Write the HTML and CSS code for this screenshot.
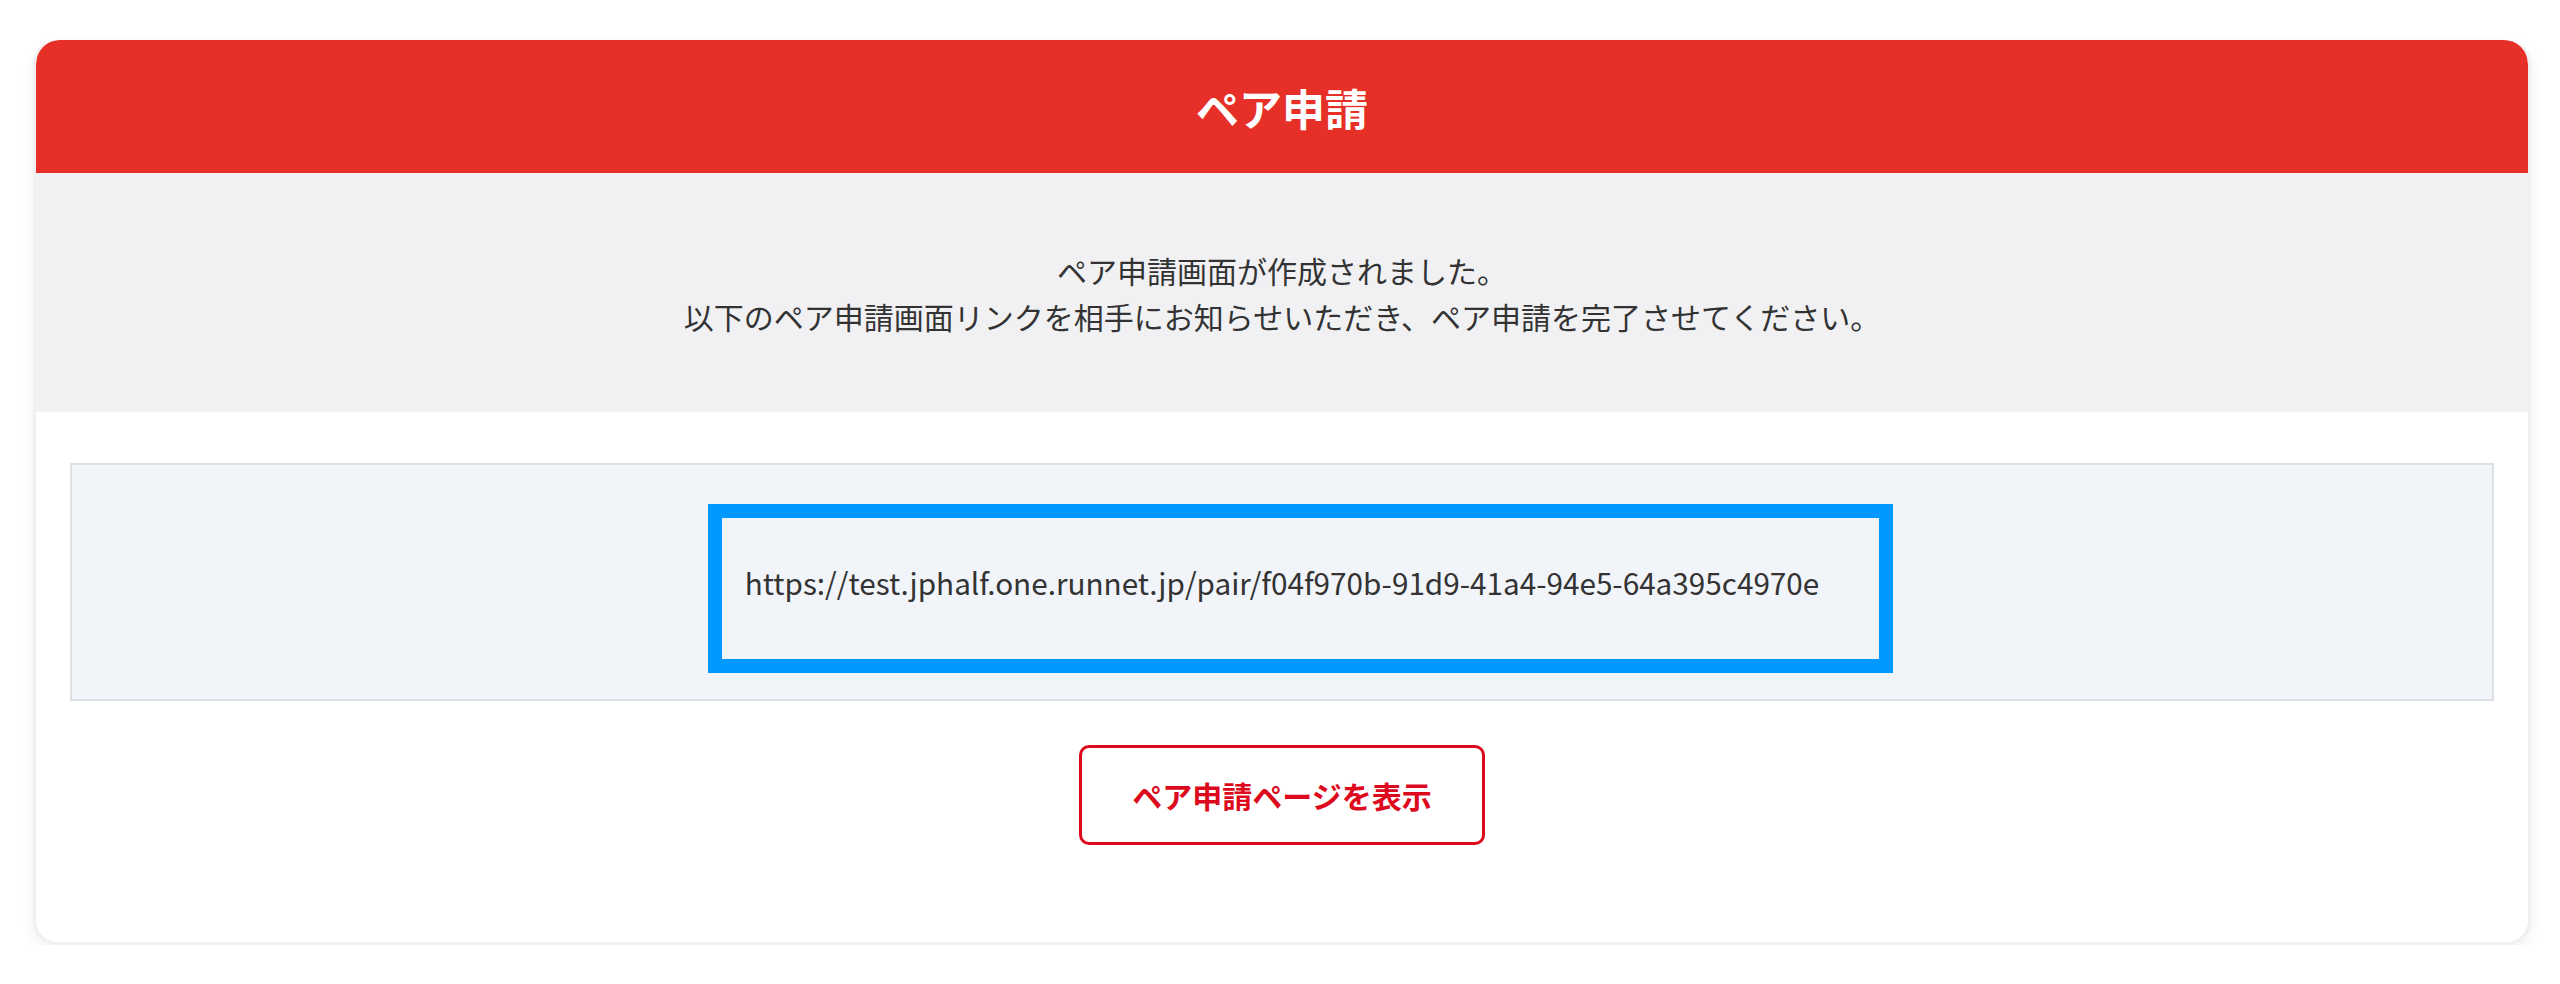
FILE: index.html
```html
<!DOCTYPE html>
<html lang="ja">
  <head>
    <meta charset="UTF-8" />
    <meta name="viewport" content="width=device-width, initial-scale=1.0" />
    <title>ペア申請</title>
    <link rel="stylesheet" href="styles.css">
  </head>
  <body>
    <section class="card">
      <h1 class="card-title">ペア申請</h1>
      <div class="intro">
        <p>ペア申請画面が作成されました。</p>
        <p>以下のペア申請画面リンクを相手にお知らせいただき、ペア申請を完了させてください。</p>
      </div>
      <div class="card-body">
        <div class="link-box">
          <span class="link-url">https://test.jphalf.one.runnet.jp/pair/f04f970b-91d9-41a4-94e5-64a395c4970e</span>
          <div class="link-mark"></div>
        </div>
        <button type="button" class="btn-outline">ペア申請ページを表示</button>
      </div>
    </section>
  </body>
</html>
```

FILE: styles.css
```css
/*********** Base ***********/
* {
  box-sizing: border-box;
}

body {
  margin: 0;
  background: #fff;
  color: #333;
  font-family: "Noto Sans CJK JP", "Noto Sans", sans-serif;
}

p {
  margin: 0;
}

/*********** Card ***********/
.card {
  margin: 40px 29px 0 33px;
  border: 3px solid #f0f0f2;
  border-top: none;
  border-radius: 24px;
  background: #fff;
  box-shadow: 0 5px 14px rgba(0, 0, 0, 0.06);
  overflow: hidden;
}

.card-title {
  margin: 0;
  height: 133px;
  display: flex;
  align-items: center;
  justify-content: center;
  background-color: #e63027;
  border-radius: 24px 24px 0 0;
  color: #fff;
  font-size: 43px;
  font-weight: 700;
}

.intro {
  height: 239px;
  display: flex;
  flex-direction: column;
  justify-content: center;
  background-color: #f1f1f3;
  font-size: 30px;
  line-height: 46px;
  text-align: center;
}

/*********** Body ***********/
.card-body {
  display: flex;
  flex-direction: column;
  align-items: center;
  gap: 44px;
  padding: 51px 34px 97px;
}

.link-box {
  position: relative;
  width: 100%;
  height: 238px;
  display: flex;
  align-items: center;
  justify-content: center;
  background-color: #f1f4f9;
  border: 2px solid #dde0e5;
  font-size: 29.7px;
}

/* blue highlight drawn over the url */
.link-mark {
  position: absolute;
  left: 636px;
  top: 39px;
  width: 1185px;
  height: 169px;
  border: 14px solid #0099ff;
}

.btn-outline {
  width: 406px;
  height: 100px;
  background: #fff;
  border: 3px solid #dc0a1c;
  border-radius: 10px;
  color: #dc0a1c;
  font-family: inherit;
  font-size: 30px;
  font-weight: 700;
  cursor: pointer;
}
```
